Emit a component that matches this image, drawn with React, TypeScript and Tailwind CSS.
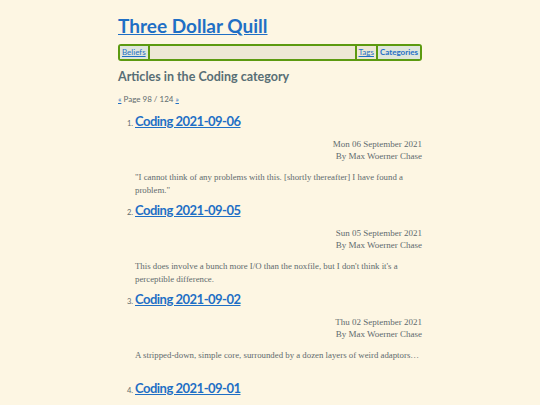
const articles = [
  {
    title: "Coding 2021-09-06",
    date: "Mon 06 September 2021",
    excerpt:
      "\"I cannot think of any problems with this. [shortly thereafter] I have found a problem.\"",
  },
  {
    title: "Coding 2021-09-05",
    date: "Sun 05 September 2021",
    excerpt:
      "This does involve a bunch more I/O than the noxfile, but I don't think it's a perceptible difference.",
  },
  {
    title: "Coding 2021-09-02",
    date: "Thu 02 September 2021",
    excerpt: "A stripped-down, simple core, surrounded by a dozen layers of weird adaptors…",
  },
  {
    title: "Coding 2021-09-01",
    date: "Wed 01 September 2021",
    excerpt: "Some more work on the tooling.",
  },
];

const sans = "font-['Lato','Open_Sans',sans-serif]";
const serif = "font-['Liberation_Serif','DejaVu_Serif',serif]";

export default function App() {
  return (
    <div className="h-[405px] overflow-hidden bg-[#fdf6e3] text-[#5f6b6e]">
      <div className="w-[304px] mx-auto pt-[14px]">
        {/* Header */}
        <h1 className={`${sans} text-[19px] leading-[23px] font-bold`}>
          <a href="#" className="text-[#1f6fc5] underline">
            Three Dollar Quill
          </a>
        </h1>

        {/* Nav */}
        <nav
          className={`${sans} mt-[7px] flex items-center h-[17px] border-2 border-[#5c9a10] rounded-[3px] bg-[#eee8d5] text-[8px] leading-[13px]`}
        >
          <a href="#" className="px-[2px] bg-[#dfe6dc] text-[#1f6fc5] underline border-r-2 border-[#5c9a10]">
            Beliefs
          </a>
          <span className="flex-1 h-[13px] border-r-2 border-[#5c9a10]" />
          <a href="#" className="px-[2px] text-[#1f6fc5] underline border-r-2 border-[#5c9a10]">
            Tags
          </a>
          <a href="#" className="px-[2px] bg-[#dfe6dc] text-[#1f6fc5] font-bold">
            Categories
          </a>
        </nav>

        <h2 className={`${sans} mt-[8px] text-[12.5px] leading-[16px] font-bold text-[#586e75]`}>
          Articles in the Coding category
        </h2>

        <p className={`${sans} mt-[9px] text-[8px] leading-[10px]`}>
          <a href="#" className="text-[#1f6fc5] underline">«</a> Page 98 / 124{" "}
          <a href="#" className="text-[#1f6fc5] underline">»</a>
        </p>

        <ol className="mt-[8px] pl-[9px]">
          {articles.map((a, i) => (
            <li key={a.title} className="flex flex-col h-[89px]">
              <div className="flex items-baseline gap-[2px]">
                <span className={`${sans} text-[7.5px] w-[6px] text-right`}>{i + 1}.</span>
                <a
                  href="#"
                  className={`${sans} text-[13px] leading-[18px] font-bold tracking-[-0.5px] text-[#1f6fc5] underline`}
                >
                  {a.title}
                </a>
              </div>
              <div className="pl-[8px]">
                <div className={`${serif} mt-[8px] text-right text-[9px] leading-[12px]`}>
                  <div>{a.date}</div>
                  <div>By Max Woerner Chase</div>
                </div>
                <p className={`${serif} mt-[9px] text-[8.8px] leading-[12.5px]`}>{a.excerpt}</p>
              </div>
            </li>
          ))}
        </ol>
      </div>
    </div>
  );
}
